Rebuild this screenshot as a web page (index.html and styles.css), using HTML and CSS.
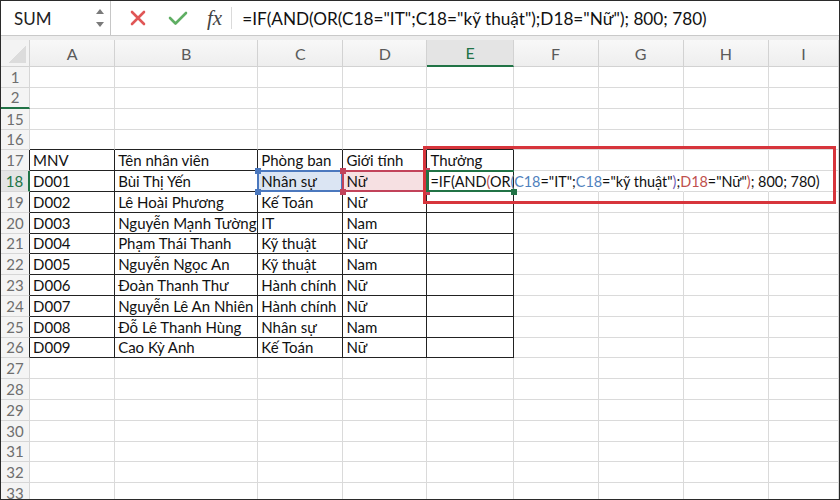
FILE: index.html
```html
<!DOCTYPE html>
<html lang="vi">
<head>
<meta charset="UTF-8" />
<title>Hàm IF AND OR</title>
<link rel="stylesheet" href="styles.css">
</head>
<body>
<div class="frame">

  <div class="formula-bar">
    <div class="name-box">SUM</div>
    <div class="spinner">
      <svg width="10" height="22" viewBox="0 0 10 22"><path d="M5 2 L9 7 L1 7 Z" fill="#7a7a7a"/><path d="M1 15 L9 15 L5 20 Z" fill="#7a7a7a"/></svg>
    </div>
    <div class="fb-icons">
      <svg class="ico-x" width="16" height="16" viewBox="0 0 16 16"><path d="M2 2 L14 14 M14 2 L2 14" stroke="#e05656" stroke-width="2.6" stroke-linecap="round"/></svg>
      <svg class="ico-ok" width="20" height="16" viewBox="0 0 20 16"><path d="M2 8 L7.5 13.5 L18 3" stroke="#5fae63" stroke-width="2.6" fill="none" stroke-linecap="round" stroke-linejoin="round"/></svg>
      <span class="fx">fx</span>
    </div>
    <div class="fb-text">=IF(AND(OR(C18="IT";C18="kỹ thuật");D18="Nữ"); 800; 780)</div>
  </div>
  <div class="band"></div>

  <table class="grid">
    <colgroup>
      <col class="c-h"><col class="c-a"><col class="c-b"><col class="c-c"><col class="c-d">
      <col class="c-e"><col class="c-f"><col class="c-g"><col class="c-h2"><col class="c-i">
    </colgroup>
    <thead>
      <tr>
        <th class="corner"></th><th>A</th><th>B</th><th>C</th><th>D</th>
        <th class="col-act">E</th><th>F</th><th>G</th><th>H</th><th>I</th>
      </tr>
    </thead>
    <tbody>
      <tr><th class="rh">1</th><td></td><td></td><td></td><td></td><td></td><td></td><td></td><td></td><td></td></tr>
      <tr><th class="rh hidden-below">2</th><td></td><td></td><td></td><td></td><td></td><td></td><td></td><td></td><td></td></tr>
      <tr><th class="rh">15</th><td></td><td></td><td></td><td></td><td></td><td></td><td></td><td></td><td></td></tr>
      <tr><th class="rh">16</th><td class="above"></td><td class="above"></td><td class="above"></td><td class="above"></td><td class="above"></td><td></td><td></td><td></td><td></td></tr>
      <tr><th class="rh edge">17</th><td class="d">MNV</td><td class="d">Tên nhân viên</td><td class="d">Phòng ban</td><td class="d">Giới tính</td><td class="d">Thưởng</td><td></td><td></td><td></td><td></td></tr>
      <tr>
        <th class="rh row-act">18</th>
        <td class="d">D001</td>
        <td class="d">Bùi Thị Yến</td>
        <td class="d ref ref-c">Nhân sự<span class="h tl"></span><span class="h tr"></span><span class="h bl"></span><span class="h br"></span></td>
        <td class="d ref ref-d">Nữ<span class="h tl"></span><span class="h tr"></span><span class="h bl"></span><span class="h br"></span></td>
        <td class="d edit">=IF(AND<span class="k-red">(</span>OR<span class="k-blue">(</span><span class="k-blue">C18</span>="IT";<span class="k-blue">C18</span>="kỹ thuật"<span class="k-purple">)</span>;<span class="k-red">D18</span>="Nữ"<span class="k-red">)</span>; 800; 780)<span class="h br"></span></td>
        <td class="ov"></td><td class="ov"></td><td class="ov"></td><td></td>
      </tr>
      <tr><th class="rh edge">19</th><td class="d">D002</td><td class="d">Lê Hoài Phương</td><td class="d">Kế Toán</td><td class="d">Nữ</td><td class="d"></td><td></td><td></td><td></td><td></td></tr>
      <tr><th class="rh edge">20</th><td class="d">D003</td><td class="d">Nguyễn Mạnh Tường</td><td class="d">IT</td><td class="d">Nam</td><td class="d"></td><td></td><td></td><td></td><td></td></tr>
      <tr><th class="rh edge">21</th><td class="d">D004</td><td class="d">Phạm Thái Thanh</td><td class="d">Kỹ thuật</td><td class="d">Nữ</td><td class="d"></td><td></td><td></td><td></td><td></td></tr>
      <tr><th class="rh edge">22</th><td class="d">D005</td><td class="d">Nguyễn Ngọc An</td><td class="d">Kỹ thuật</td><td class="d">Nam</td><td class="d"></td><td></td><td></td><td></td><td></td></tr>
      <tr><th class="rh edge">23</th><td class="d">D006</td><td class="d">Đoàn Thanh Thư</td><td class="d">Hành chính</td><td class="d">Nữ</td><td class="d"></td><td></td><td></td><td></td><td></td></tr>
      <tr><th class="rh edge">24</th><td class="d">D007</td><td class="d">Nguyễn Lê An Nhiên</td><td class="d">Hành chính</td><td class="d">Nữ</td><td class="d"></td><td></td><td></td><td></td><td></td></tr>
      <tr><th class="rh edge">25</th><td class="d">D008</td><td class="d">Đỗ Lê Thanh Hùng</td><td class="d">Nhân sự</td><td class="d">Nam</td><td class="d"></td><td></td><td></td><td></td><td></td></tr>
      <tr><th class="rh edge">26</th><td class="d">D009</td><td class="d">Cao Kỳ Anh</td><td class="d">Kế Toán</td><td class="d">Nữ</td><td class="d"></td><td></td><td></td><td></td><td></td></tr>
      <tr><th class="rh">27</th><td></td><td></td><td></td><td></td><td></td><td></td><td></td><td></td><td></td></tr>
      <tr><th class="rh">28</th><td></td><td></td><td></td><td></td><td></td><td></td><td></td><td></td><td></td></tr>
      <tr><th class="rh">29</th><td></td><td></td><td></td><td></td><td></td><td></td><td></td><td></td><td></td></tr>
      <tr><th class="rh">30</th><td></td><td></td><td></td><td></td><td></td><td></td><td></td><td></td><td></td></tr>
      <tr><th class="rh">31</th><td></td><td></td><td></td><td></td><td></td><td></td><td></td><td></td><td></td></tr>
      <tr><th class="rh">32</th><td></td><td></td><td></td><td></td><td></td><td></td><td></td><td></td><td></td></tr>
      <tr><th class="rh">33</th><td></td><td></td><td></td><td></td><td></td><td></td><td></td><td></td><td></td></tr>
    </tbody>
  </table>

  <div class="callout"></div>
</div>
</body>
</html>
```

FILE: styles.css
```css
* {
  box-sizing: border-box;
}
body {
  margin: 0;
  background: #fff;
  font-family: Lato, "Noto Sans", sans-serif;
}
.frame {
  position: relative;
  width: 840px;
  height: 500px;
  border: 1px solid #2b2b2b;
  overflow: hidden;
  background: #fff;
}

/* formula bar */
.formula-bar {
  display: flex;
  align-items: center;
  height: 35px;
  border-bottom: 1px solid #c9c9c9;
}
.name-box {
  width: 94px;
  padding-left: 13px;
  font-size: 17px;
  color: #222;
}
.spinner {
  width: 16px;
  height: 100%;
  display: flex;
  align-items: center;
  border-right: 1px solid #c6c6c6;
}
.fb-icons {
  display: flex;
  align-items: center;
  height: 22px;
  padding-left: 19px;
  padding-right: 9px;
  border-right: 1px solid #dadada;
}
.ico-ok {
  margin-left: 22px;
}
.fx {
  margin-left: 19px;
  font-family: "Liberation Serif", serif;
  font-style: italic;
  font-size: 21px;
  color: #444;
  line-height: 22px;
}
.fb-text {
  padding-left: 10px;
  font-size: 17.2px;
  color: #111;
  white-space: nowrap;
}
.band {
  height: 4px;
  background: #ededed;
}

/* sheet */
.grid {
  border-collapse: separate;
  border-spacing: 0;
  table-layout: fixed;
  width: 838px;
  font-size: 15px;
  color: #111;
}
.c-h { width: 29px; }
.c-a { width: 85px; }
.c-b { width: 143px; }
.c-c { width: 85px; }
.c-d { width: 84px; }
.c-e { width: 86px; }
.c-f, .c-g, .c-h2 { width: 85px; }
.c-i { width: 70px; }

.grid th,
.grid td {
  border-right: 1px solid #dadada;
  border-bottom: 1px solid #dadada;
  padding: 0 3px;
  white-space: nowrap;
  overflow: visible;
  text-align: left;
  font-weight: normal;
  vertical-align: bottom;
  line-height: 19px;
}
.grid thead tr {
  height: 27px;
}
.grid thead th {
  background: linear-gradient(#f8f8f8, #eeeeee);
  border-color: #d2d2d2;
  color: #5a5a5a;
  text-align: center;
  vertical-align: middle;
  font-size: 16px;
}
.grid thead th.corner {
  background: linear-gradient(135deg, #f3f3f3 52%, #dcdcdc 52%);
  background-size: 18px 18px;
  background-repeat: no-repeat;
  background-position: right 3px bottom 3px;
  background-color: #f3f3f3;
}
.grid thead th.col-act {
  background: #e4e4e4;
  border-bottom: 2px solid #217346;
  color: #217346;
}
.grid tbody tr {
  height: 20.8px;
}
.grid th.rh {
  padding: 0;
  text-align: center;
  background: #f4f4f4;
  border-color: #d6d6d6;
  color: #6e6e6e;
  font-size: 15px;
}
.grid th.hidden-below {
  border-bottom: 2px solid #217346;
}
.grid th.edge {
  border-right-color: #222;
}
.grid th.row-act {
  background: #e4e4e4;
  color: #217346;
  border-right: 2px solid #217346;
}
.grid td.above {
  border-bottom-color: #222;
}
.grid td.d {
  border-right-color: #222;
  border-bottom-color: #222;
}
.grid td.ov {
  border-right-color: transparent;
}

/* formula references */
.ref {
  position: relative;
}
.ref::after {
  content: "";
  position: absolute;
  left: -1px;
  top: -1px;
  right: -1px;
  bottom: -1px;
  border: 2px solid var(--ref);
}
.ref-c {
  --ref: #4b78be;
  background: #dbe5f3;
}
.ref-d {
  --ref: #c2435a;
  background: #f6e0e2;
}
.h {
  position: absolute;
  width: 6px;
  height: 6px;
  background: var(--ref);
  z-index: 1;
}
.h.tl { left: -3px; top: -3px; }
.h.tr { right: -4px; top: -3px; }
.h.bl { left: -3px; bottom: -4px; }
.h.br { right: -4px; bottom: -4px; }

.edit {
  --ref: #217346;
  position: relative;
  background: #fff;
  font-size: 14.4px;
  padding-left: 4px;
  z-index: 2;
}
.edit::after {
  content: "";
  position: absolute;
  left: -1px;
  top: -1px;
  right: -1px;
  bottom: -1px;
  border: 2px solid #217346;
  border-left-width: 3px;
  border-right: none;
}
.k-red { color: #c0504d; }
.k-blue { color: #4f81bd; }
.k-purple { color: #6f5db3; }

/* annotation box */
.callout {
  position: absolute;
  left: 422px;
  top: 145px;
  width: 413px;
  height: 58px;
  border: 3px solid #d7353c;
  z-index: 3;
}
```
